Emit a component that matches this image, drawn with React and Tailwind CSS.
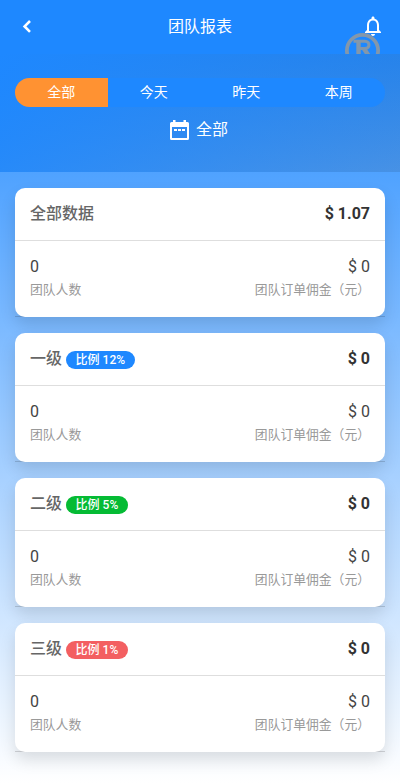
import React, { useState } from 'react';
import { MdNotificationsNone } from 'react-icons/md';

const tabs = ['全部', '今天', '昨天', '本周'];

const reports = [
  { title: '全部数据', total: '$ 1.07' },
  { title: '一级', total: '$ 0', rate: '比例 12%', badge: 'bg-[#1e88ff]' },
  { title: '二级', total: '$ 0', rate: '比例 5%', badge: 'bg-[#05bb34]' },
  { title: '三级', total: '$ 0', rate: '比例 1%', badge: 'bg-[#f35f61]' },
];

function CalendarIcon() {
  return (
    <svg className="h-5 w-5" viewBox="0 0 20 20">
      <path
        fill="#fff"
        fillRule="evenodd"
        d="M3 0h2.5v2h8V0H16v2h1.5A1.5 1.5 0 0 1 19 3.5v15a1.5 1.5 0 0 1-1.5 1.5h-16A1.5 1.5 0 0 1 0 18.5v-15A1.5 1.5 0 0 1 1.5 2H3zM2 7v11h15V7zM4 9h3v2H4zM8 9h3v2H8zM12 9h3v2h-3z"
      />
    </svg>
  );
}

function Header() {
  return (
    <header className="relative flex h-[54px] items-center justify-between overflow-hidden bg-[#1e88ff] px-[15px] text-white">
      <button className="w-6">
        <svg className="h-6 w-6" viewBox="0 0 24 24" fill="none" stroke="#fff" strokeWidth="2.6">
          <path d="M15 6L9.6 11.4L15 16.8" />
        </svg>
      </button>
      <h1 className="text-[16px] leading-6">团队报表</h1>
      <button className="w-6 pb-[2px]">
        <MdNotificationsNone className="h-6 w-6" />
      </button>
      {/* Brand mark, cut off by the bottom of the bar */}
      <svg className="absolute right-[20px] top-[33px]" width="35" height="36" viewBox="0 0 35 36" fill="none" stroke="#8397ab">
        <circle cx="17.5" cy="17.5" r="15.6" strokeWidth="3.8" />
        <path d="M8.5 8.3H20C25.3 8.3 25.3 15.5 20 15.5H15" strokeWidth="3" />
        <path d="M13.5 8V26M18.5 15L24.5 24" strokeWidth="4.4" />
      </svg>
    </header>
  );
}

function ReportCard({ title, total, rate, badge }) {
  return (
    <section className="h-[129px] rounded-t-[10px] border-b border-black/15">
      <div className="h-[129px] rounded-[10px] bg-white shadow-[0_8px_16px_rgba(0,0,0,0.12)]">
        <div className="flex h-[53px] items-center justify-between border-b border-[#dedede] px-[15px]">
          <div className="flex items-center">
            <span className="text-[16px] font-medium leading-6 text-[#666]">{title}</span>
            {rate && (
              <span className={`ml-1 mt-px h-[18px] rounded-full px-[9.6px] text-[12px] font-medium leading-[18px] text-white ${badge}`}>
                {rate}
              </span>
            )}
          </div>
          <span className="text-[16px] font-bold leading-6 text-[#333]">{total}</span>
        </div>
        <div className="flex justify-between px-[15px] pt-[14px]">
          <div>
            <p className="text-[16px] leading-[23px] text-[#444]">0</p>
            <p className="text-[12.8px] leading-6 text-[#999]">团队人数</p>
          </div>
          <div className="text-right">
            <p className="text-[16px] leading-[23px] text-[#444]">$ 0</p>
            <p className="text-[12.8px] leading-6 text-[#999]">团队订单佣金（元）</p>
          </div>
        </div>
      </div>
    </section>
  );
}

export default function App() {
  const [active, setActive] = useState(0);

  return (
    <div className="h-[783px] w-[400px] overflow-hidden bg-[linear-gradient(to_bottom,#1e88ff,#fff)] font-[Roboto,'Noto_Sans_CJK_SC',sans-serif]">
      <Header />
      <div className="h-[118px] bg-[linear-gradient(135deg,#1e88ff,rgba(0,0,0,0.1))] px-[15px] pt-6 text-white">
        <div className="flex h-[29px] overflow-hidden rounded-full bg-[#1e88ff]">
          {tabs.map((tab, i) => (
            <button
              key={tab}
              onClick={() => setActive(i)}
              className={`flex-1 text-[14px] leading-[29px] ${active === i ? 'bg-[#ff9232]' : ''}`}
            >
              {tab}
            </button>
          ))}
        </div>
        <div className="mr-[2px] mt-[11px] flex items-center justify-center gap-1.5">
          <CalendarIcon />
          <span className="text-[16px] leading-6">{tabs[active]}</span>
        </div>
      </div>
      <main className="flex flex-col gap-4 px-[15px] pt-4">
        {reports.map((report) => (
          <ReportCard key={report.title} {...report} />
        ))}
      </main>
    </div>
  );
}
